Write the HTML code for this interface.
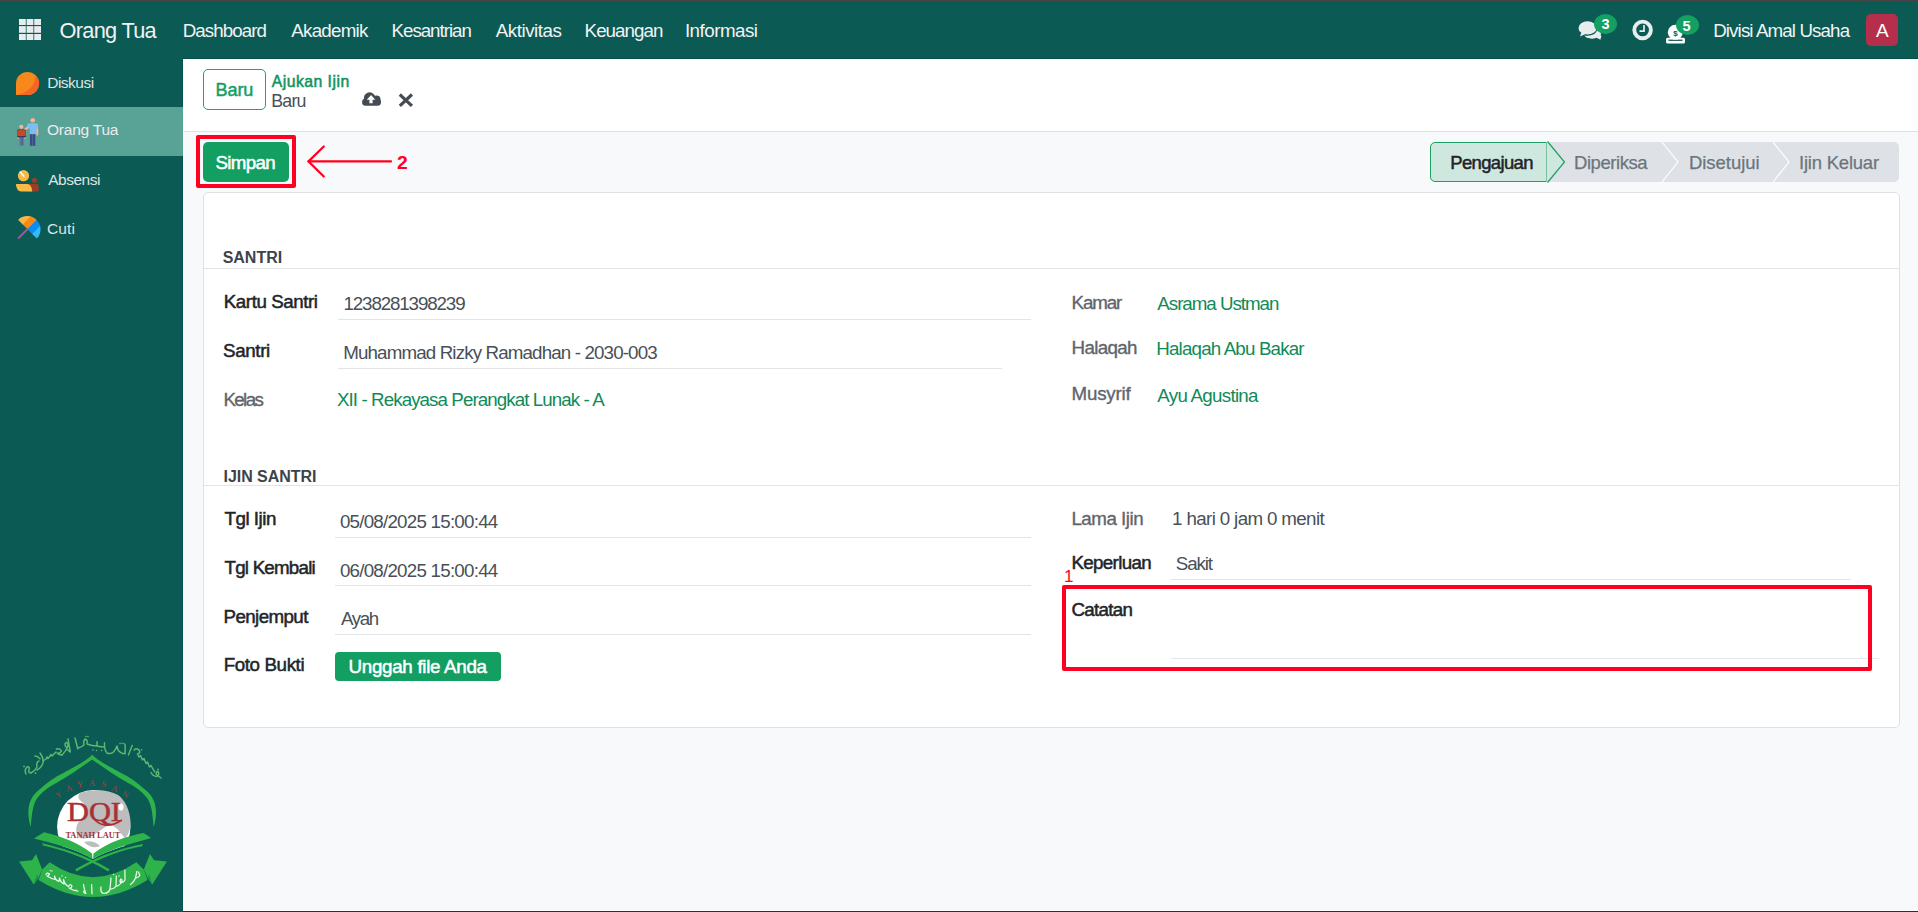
<!DOCTYPE html>
<html><head><meta charset="utf-8"><style>
html,body{margin:0;padding:0;}
body{width:1918px;height:912px;overflow:hidden;position:relative;background:#f8f9fa;font-family:"Liberation Sans",sans-serif;}
.a{position:absolute;}
.t{position:absolute;white-space:pre;line-height:1;font-family:"Liberation Sans",sans-serif;}
svg{position:absolute;left:0;top:0;overflow:visible;}
</style></head><body>
<div class="a" style="left:0;top:0;width:1918px;height:1px;background:#4a4344"></div>
<div class="a" style="left:0;top:1px;width:1918px;height:57px;background:#0c5a54"></div>
<div class="a" style="left:182px;top:58px;width:1736px;height:1px;background:#03504a"></div>
<div class="a" style="left:0;top:58px;width:182px;height:853px;background:#0c5a54"></div>
<div class="a" style="left:182px;top:59px;width:1px;height:852px;background:#02514b"></div>
<div class="a" style="left:0;top:107px;width:183px;height:49px;background:#58a296"></div>
<div class="a" style="left:183px;top:59px;width:1px;height:852px;background:#ffffff"></div>
<div class="a" style="left:183px;top:910px;width:1735px;height:1px;background:#ffffff"></div>
<div class="a" style="left:0;top:911px;width:183px;height:1px;background:#483f40"></div>
<div class="a" style="left:183px;top:911px;width:1735px;height:1px;background:#2e2e2e"></div>
<div class="a" style="left:184px;top:59px;width:1734px;height:72px;background:#ffffff"></div>
<div class="a" style="left:184px;top:131px;width:1734px;height:1px;background:#dfe2e5"></div>
<!-- Baru button -->
<div class="a" style="left:203px;top:69px;width:61px;height:39px;border:1px solid #1fa46a;border-radius:5px;background:#fff"></div>
<!-- red box simpan -->
<div class="a" style="left:196px;top:135px;width:92px;height:45px;border:4px solid #ff0022;border-radius:2px"></div>
<div class="a" style="left:203px;top:142px;width:86px;height:40px;background:#129f61;border-radius:5px"></div>
<!-- status bar -->
<div class="a" style="left:1540px;top:142px;width:359px;height:40px;background:#dee2e6;border-radius:0 5px 5px 0"></div>
<div class="a" style="left:1430px;top:142px;width:115px;height:38px;background:#cfe8df;border:1px solid #1a9f63;border-right:1px solid #1a9f63;border-radius:5px 0 0 5px"></div>
<!-- sheet -->
<div class="a" style="left:203px;top:192px;width:1695px;height:534px;background:#fff;border:1px solid #dee2e6;border-radius:5px"></div>
<div class="a" style="left:204px;top:268px;width:1695px;height:1px;background:#e4e4e4"></div>
<div class="a" style="left:204px;top:485px;width:1695px;height:1px;background:#e4e4e4"></div>
<!-- underlines -->
<div class="a" style="left:338px;top:319px;width:693px;height:1px;background:#e1e5e9"></div>
<div class="a" style="left:338px;top:368px;width:664px;height:1px;background:#e1e5e9"></div>
<div class="a" style="left:335px;top:537px;width:696px;height:1px;background:#e1e5e9"></div>
<div class="a" style="left:335px;top:585px;width:696px;height:1px;background:#e1e5e9"></div>
<div class="a" style="left:335px;top:634px;width:696px;height:1px;background:#e1e5e9"></div>
<div class="a" style="left:1171px;top:579px;width:680px;height:1px;background:#e1e5e9"></div>
<div class="a" style="left:1171px;top:658px;width:708px;height:1px;background:#e6e9ec"></div>
<!-- unggah -->
<div class="a" style="left:335px;top:652px;width:166px;height:29px;background:#129f61;border-radius:4px"></div>
<!-- red box catatan -->
<div class="a" style="left:1062px;top:585px;width:802px;height:78px;border:4px solid #ff0022;border-radius:2px"></div>
<!-- avatar -->
<div class="a" style="left:1866px;top:14px;width:32px;height:32px;background:#b52f4c;border-radius:5px"></div>

<svg width="1918" height="912" viewBox="0 0 1918 912">
<!-- grid icon -->
<g fill="#e9ecef">
<rect x="19" y="19" width="6.8" height="6"/><rect x="26.6" y="19" width="6.8" height="6"/><rect x="34.2" y="19" width="6.8" height="6"/>
<rect x="19" y="26.1" width="6.8" height="6.7"/><rect x="26.6" y="26.1" width="6.8" height="6.7"/><rect x="34.2" y="26.1" width="6.8" height="6.7"/>
<rect x="19" y="34" width="6.8" height="6"/><rect x="26.6" y="34" width="6.8" height="6"/><rect x="34.2" y="34" width="6.8" height="6"/>
</g>
<!-- arrow annotation -->
<g stroke="#ff0022" stroke-width="2.2" fill="none" stroke-linecap="round" stroke-linejoin="round">
<path d="M323.8,146.5 L308.5,161.4 L323.8,176.5"/>
<path d="M308.5,161.4 H391"/>
</g>
<!-- status arrow -->
<path d="M1546.5,142 L1564.5,162 L1546.5,182 Z" fill="#cfe8df"/>
<path d="M1547.5,141.5 L1564.5,162 L1547.5,182.5" fill="none" stroke="#1a9f63" stroke-width="1.2"/>
<path d="M1662,142 L1678,162 L1662,182" fill="none" stroke="#ffffff" stroke-width="1.2"/>
<path d="M1773,142 L1789,162 L1773,182" fill="none" stroke="#ffffff" stroke-width="1.2"/>
</svg>

<svg width="1918" height="912" viewBox="0 0 1918 912">
<!-- chat icon -->
<g fill="#e9ecef">
<path d="M1592,32.5 C1596,33 1600.5,34.5 1601.5,36 C1601,37.5 1600.5,39 1600.5,39.8 L1596.5,37.8 C1594,38.6 1590,38.8 1587.5,37.8 C1585,37 1584.5,36 1586,35 Z"/>
</g>
<ellipse cx="1592.5" cy="33.8" rx="8.6" ry="4.6" fill="#e9ecef"/>
<path d="M1578.5,28 A9,6.7 0 1 1 1584,34.2" fill="#0c5a54" stroke="#0c5a54" stroke-width="2"/>
<g fill="#e9ecef">
<ellipse cx="1587.5" cy="27.9" rx="9" ry="6.6"/>
<path d="M1581.5,32 L1580,36.6 L1585.5,34 Z"/>
</g>
<!-- clock -->
<circle cx="1642.6" cy="29.9" r="8.3" fill="none" stroke="#e9ecef" stroke-width="3.9"/>
<path d="M1644,25 V31.2 H1639.5" fill="none" stroke="#e9ecef" stroke-width="1.7"/>
<!-- money -->
<g>
<rect x="1666" y="37.8" width="19" height="5.7" rx="1.5" fill="#ffffff"/>
<rect x="1668.5" y="39.6" width="14" height="1.3" fill="#0c5a54"/>
<circle cx="1675.3" cy="32.2" r="7.5" fill="#ffffff"/>
<text x="1675.6" y="35.5" font-family="Liberation Sans" font-size="8" font-weight="700" fill="#0c5a54" text-anchor="middle">$</text>
</g>
<!-- cloud upload -->
<g fill="#454b52">
<circle cx="369.6" cy="98" r="5.7"/>
<circle cx="376.5" cy="99.5" r="4"/>
<rect x="362.1" y="98.5" width="18.9" height="7.3" rx="3.6"/>
</g>
<path d="M371.1,95 L375.3,99.7 H372.6 V103.3 H369.4 V99.7 H366.8 Z" fill="#ffffff"/>
<!-- close x -->
<path d="M401,95.6 L410.8,104.8 M410.8,95.6 L401,104.8" stroke="#454b52" stroke-width="3.2" stroke-linecap="square"/>
<!-- sidebar: diskusi -->
<path d="M16,95 V83.5 A11.5,11.5 0 1 1 27.5,95 Z" fill="#f7891a"/>
<path d="M35.2,74.9 C36,84 30,92 17,95 H27.5 A11.5,11.5 0 0 0 35.2,74.9 Z" fill="#f56428"/>
<!-- sidebar: orang tua -->
<g>
<circle cx="32.7" cy="120.2" r="2.3" fill="#f8b29a"/>
<path d="M27,125.5 Q27,123.3 29.5,123.3 H35.8 Q38.1,123.3 38.1,125.5 V128.5 H36.3 V134.2 H29.8 V128.5 H27 Z" fill="#7dbdf5"/>
<rect x="36.3" y="128.3" width="1.9" height="7.3" rx="0.9" fill="#f8b29a"/>
<path d="M27.5,126.5 L28.8,128.2 L24.5,131.2 L23.4,129.6 Z" fill="#f8b29a"/>
<rect x="29.9" y="134.2" width="2.6" height="11.6" fill="#3f4a8a"/>
<rect x="32.7" y="134.2" width="2.6" height="11.6" fill="#3f4a8a"/>
<circle cx="21.3" cy="126.8" r="2.1" fill="#f8b29a"/>
<rect x="17.3" y="129.4" width="8.5" height="8" rx="1.2" fill="#1f2d6b"/>
<rect x="17.1" y="130" width="8.7" height="6.2" rx="1.5" fill="#c44a2c"/>
<rect x="17.5" y="137.5" width="1.2" height="1.2" fill="#f8b29a"/>
<rect x="24.4" y="137.5" width="1.2" height="1.2" fill="#f8b29a"/>
<rect x="19.5" y="137.6" width="1.9" height="8" fill="#6272a6"/>
<rect x="21.5" y="137.6" width="1.8" height="8" fill="#4d5a96"/>
</g>
<!-- sidebar: absensi -->
<circle cx="23.5" cy="175.7" r="5.6" fill="#fbb945"/>
<path d="M20.3,172.1 L23.9,176.2" stroke="#ffffff" stroke-width="1.5" stroke-linecap="round"/>
<circle cx="34.5" cy="180.3" r="2.6" fill="#983f25"/>
<path d="M27.8,184.1 H36.6 A2.2,2.2 0 0 1 38.8,186.3 V189.4 A2.2,2.2 0 0 1 36.6,191.6 H27.8 Z" fill="#983f25"/>
<path d="M16,184.1 H27.5 C30.5,184.1 32,188 32.2,191.6 H21 C18,191.6 16,188 16,184.1 Z" fill="#fbb945"/>
<!-- sidebar: cuti umbrella -->
<defs><clipPath id="umb"><path d="M17.99,219.8 A13.3,13.3 0 0 1 36.8,238.6 Z"/></clipPath></defs>
<g clip-path="url(#umb)"><g transform="rotate(45 27.4 229.2)">
<rect x="14" y="210" width="7.2" height="20" fill="#fbb545"/>
<rect x="20.7" y="210" width="7.2" height="20" fill="#f78a15"/>
<rect x="27.4" y="210" width="7.2" height="20" fill="#0d8bf2"/>
<rect x="34.1" y="210" width="6.8" height="20" fill="#2fbdf8"/>
</g></g>
<path d="M27.4,229.2 L18.6,238" stroke="#a0559a" stroke-width="2" stroke-linecap="round"/>
</svg>

<!-- badges -->
<div class="a" style="left:1594px;top:14px;width:23px;height:20px;background:#13a062;border-radius:50%"></div>
<div class="a" style="left:1676px;top:15px;width:23px;height:20px;background:#13a062;border-radius:50%"></div>

<svg width="1918" height="912" viewBox="0 0 1918 912">
<!-- arabic arc text (approximation) -->
<g fill="none" stroke="#5fb870" stroke-width="1.45" stroke-linecap="round" stroke-linejoin="round">
<path d="M26,774 Q24,770 27,767 Q30,766 29,770 Q28,773 31,773 Q35,771 37,767 Q36,762 39,761"/>
<path d="M40,753 Q44,758 43,763 Q41,768 37,770"/>
<path d="M35,756 Q37.5,756 40,758.7"/>
<path d="M43,761 L46,759 L47,757 L48,758.5 L50,756 L51,754.5 L52,756 L56,752"/>
<path d="M56.4,749 Q60,748 61.5,751 Q60,754 57,753 Q59,755 62,755"/>
<path d="M62,755 Q66,751 67.5,747 Q69,743 66,742.5 Q64,744 66,747 Q68,751 70.3,752 L68,739"/>
<path d="M75,738 L77.8,748.8"/>
<path d="M78,748 Q82,747 84,745 Q83,741 85,739 Q88,740 87,744 Q92,746 97,746 L97,741.7 M97,746 Q101,747 104.5,747 L104.5,742.8"/>
<path d="M104.5,747 Q105,751 107,753 Q111,754.5 113.5,752 Q116,749 117,746 L118,750 Q121,753.8 125.1,753.8 L125.1,744.4"/>
<path d="M132.2,745.5 L128.4,754.9"/>
<path d="M134.2,750 Q136,747.5 139,750 Q141,753 137.5,754 L139,757 L140.5,755.5 L142.5,760 L144,758.5 L146,763.5 L147.5,762 L149.5,767 L151,765.5 L154.7,771.9"/>
<path d="M151,772.5 Q153,776.5 157,776.5 Q160,774.5 158,771.5 Q155.5,771.5 156.5,774.5 L161,778"/>
</g>
<g fill="#5fb870">
<circle cx="24" cy="766.4" r="0.9"/><circle cx="35.5" cy="773.2" r="0.9"/><circle cx="86" cy="736.5" r="0.8"/><circle cx="88" cy="736.5" r="0.8"/>
<circle cx="93" cy="750" r="0.8"/><circle cx="96.5" cy="750.5" r="0.8"/><circle cx="101.5" cy="750.5" r="0.8"/>
<circle cx="120" cy="743.6" r="0.8"/><circle cx="122" cy="743.2" r="0.8"/><circle cx="124" cy="743.6" r="0.8"/><circle cx="138.5" cy="749.8" r="0.8"/><circle cx="141.5" cy="749.8" r="0.8"/><circle cx="158" cy="769.5" r="0.9"/>
</g>
<!-- dome -->
<path d="M30.8,827.2 C26,812 28,798 39.5,789.5 C47,783 52,779.5 57.1,776.3 C70,769 84,763 92.2,754.8 C100.4,763 114.4,769 127.3,776.3 C132.4,779.5 137.4,783 144.9,789.5 C156.4,798 158.4,812 153.6,827.2 C152.4,812 151.4,802 144.9,795.6 C141.4,791 135.4,787 127.3,782.5 C112.4,774 98.4,764 92.2,759.5 C86,764 72,774 57.1,782.5 C49,787 43,791 39.5,795.6 C33,802 32,812 30.8,827.2 Z" fill="#2db34a"/>
<!-- globe -->
<defs><clipPath id="gclip"><path d="M30,770 H160 V837.9 C130,844 109,849 93,859 C76,849 55,844 33.9,838.5 Z"/></clipPath></defs>
<g clip-path="url(#gclip)">
<circle cx="93.8" cy="826.8" r="36.7" fill="#ffffff"/>
<g fill="#bdbdbd">
<path d="M80,793 C92,789 108,789 118,795 C125,800 130,810 130.5,822 C130.5,830 128,836 125,838 C121,834 118,828 113,826 C108,824 104,828 98,832 C92,836 86,840 80,838 C76,835 75,828 78,823 C82,818 88,816 88,810 C88,805 82,803 79,799 C78,797 78,795 80,793 Z"/>
<path d="M84,842 C90,840 96,842 100,846 C96,848 90,848 84,842 Z"/>
</g>
<g fill="#ffffff">
<ellipse cx="121" cy="807" rx="2.5" ry="3.5"/>
</g>
</g>
<!-- YAYASAN -->
<g fill="#b03a3a" font-family="Liberation Serif" font-size="8.5" text-anchor="middle">
<text x="60" y="797" transform="rotate(-30 60 797)">Y</text>
<text x="70" y="791" transform="rotate(-20 70 791)">A</text>
<text x="80.5" y="787" transform="rotate(-10 80.5 787)">Y</text>
<text x="92" y="785.5">A</text>
<text x="103.5" y="787" transform="rotate(10 103.5 787)">S</text>
<text x="114" y="791" transform="rotate(20 114 791)">A</text>
<text x="124" y="797" transform="rotate(30 124 797)">N</text>
</g>
<!-- DQI -->
<text x="67" y="821" font-family="Liberation Serif" font-size="26.5" fill="#a83236" stroke="#a83236" stroke-width="0.5" textLength="54" lengthAdjust="spacingAndGlyphs">DQI</text>
<path d="M94,819 C100,826 110,828 122,820" stroke="#a83236" stroke-width="1.6" fill="none"/>
<text x="65.4" y="837.8" font-family="Liberation Serif" font-size="8" font-weight="700" fill="#a83236" textLength="55" lengthAdjust="spacingAndGlyphs">TANAH LAUT</text>
<!-- book -->
<g fill="#2db34a">
<path d="M33.9,838.5 L44,832.2 C60,836 78,842 92,853.5 L92.5,859 C76,849 55,844 33.9,838.5 Z"/>
<path d="M151.2,837.9 L143.6,832.9 C127,836 108,842 93.5,853.5 L93,859 C109,849 130,844 151.2,837.9 Z"/>
<path d="M42.1,843.3 L43,845.6 C62,850 82,856 108.3,871.5 L109.5,869.2 C83,854 62,848 42.1,843.3 Z"/>
<path d="M143,844 L142.2,846.3 C123,850 103,856 76.5,871.5 L75.2,869.2 C102,854 123,848 143,844 Z"/>
</g>
<!-- ribbon -->
<path d="M49.7,862.3 Q93,892 136.3,862.3 L143.8,869.4 L147.5,880 Q93,914 38.5,880 L42.2,869.4 Z" fill="#2db34a"/>
<path d="M36,854 L42.2,869.4 L38.5,877.7 L33.7,884.5 L19.1,861.4 L32,860.3 Z" fill="#2db34a"/>
<path d="M150,854 L143.8,869.4 L147.5,877.7 L152.3,884.5 L166.9,861.4 L154,860.3 Z" fill="#2db34a"/>
<path d="M38.5,877.7 L33.7,884.5 L37,874 Z M147.5,877.7 L152.3,884.5 L149,874 Z" fill="#17994a"/>
<!-- ribbon arabic text approx -->
<g fill="none" stroke="#eef7ef" stroke-width="1.25" stroke-linecap="round" stroke-linejoin="round">
<path d="M46,874.5 Q47,872 49.5,874 Q48,876 47,876 Q52,879 55,879.5 L54.5,876 Q56,881 59,881.5 L59.5,878 Q61,883 64,884 L63.5,879.5 Q65,885 68.5,886.5 Q70,883 72,886 Q71,889 69,888 Q74,891 78,891"/>
<path d="M83.5,884.5 Q84,889 85.9,893.5 Q83,893 84,891"/>
<path d="M91.6,884.7 L92,893.8"/>
<path d="M101,887 Q100,893 104,893.5 Q109,893 110,889 L111,878 M111,889 Q114,889 116,886 L116.3,876 M116.5,886 Q119,886 121,883 Q123,880 121,879 Q119,881 121,883 Q124,882 125,880 L124.9,870"/>
<path d="M130.5,884.5 Q134,882 135.5,878 L136.9,871.5 M136,878 Q139,877 139.8,875.5 L138.5,872"/>
</g>
<g fill="#eef7ef"><circle cx="50.3" cy="870.6" r="0.7"/><circle cx="52" cy="871" r="0.7"/><circle cx="62" cy="876" r="0.7"/><circle cx="65.5" cy="877.5" r="0.7"/><circle cx="76" cy="890" r="0.7"/><circle cx="113.5" cy="874.5" r="0.7"/><circle cx="119" cy="876" r="0.7"/></g>
</svg>

<span class="t" style="left:59.6px;top:20.0px;font-size:21.75px;font-weight:400;letter-spacing:-0.712px;color:#f1f3f5;">Orang Tua</span><span class="t" style="left:182.75px;top:22.0px;font-size:18.75px;font-weight:400;letter-spacing:-0.938px;color:#f1f3f5;">Dashboard</span><span class="t" style="left:291.25px;top:22.0px;font-size:18.75px;font-weight:400;letter-spacing:-0.736px;color:#f1f3f5;">Akademik</span><span class="t" style="left:391.5px;top:22.0px;font-size:18.75px;font-weight:400;letter-spacing:-1.028px;color:#f1f3f5;">Kesantrian</span><span class="t" style="left:495.8px;top:22.0px;font-size:18.75px;font-weight:400;letter-spacing:-0.475px;color:#f1f3f5;">Aktivitas</span><span class="t" style="left:584.6px;top:22.0px;font-size:18.75px;font-weight:400;letter-spacing:-0.957px;color:#f1f3f5;">Keuangan</span><span class="t" style="left:684.9px;top:22.0px;font-size:18.75px;font-weight:400;letter-spacing:-0.5px;color:#f1f3f5;">Informasi</span><span class="t" style="left:1713.2px;top:22.0px;font-size:18.75px;font-weight:400;letter-spacing:-0.888px;color:#f1f3f5;">Divisi Amal Usaha</span><span class="t" style="left:47.2px;top:75.0px;font-size:15.5px;font-weight:400;letter-spacing:-0.5px;color:#dee2e6;">Diskusi</span><span class="t" style="left:47.0px;top:121.7px;font-size:15.5px;font-weight:400;letter-spacing:-0.225px;color:#e9ecef;">Orang Tua</span><span class="t" style="left:48.2px;top:171.9px;font-size:15.5px;font-weight:400;letter-spacing:-0.5px;color:#dee2e6;">Absensi</span><span class="t" style="left:47.0px;top:221.2px;font-size:15.5px;font-weight:400;letter-spacing:0.1px;color:#dee2e6;">Cuti</span><span class="t" style="left:215.6px;top:81.3px;font-size:18.0px;font-weight:400;letter-spacing:-0.1px;color:#14a065;-webkit-text-stroke:0.5px #14a065;">Baru</span><span class="t" style="left:271.7px;top:74.2px;font-size:15.75px;font-weight:400;letter-spacing:0.48px;color:#10935d;-webkit-text-stroke:0.5px #10935d;">Ajukan Ijin</span><span class="t" style="left:271.3px;top:93.4px;font-size:17.75px;font-weight:400;letter-spacing:-0.767px;color:#495057;">Baru</span><span class="t" style="left:215.5px;top:154.1px;font-size:18.75px;font-weight:400;letter-spacing:-0.68px;color:#ffffff;-webkit-text-stroke:0.5px #ffffff;">Simpan</span><span class="t" style="left:397.0px;top:152.7px;font-size:19.25px;font-weight:700;letter-spacing:0.0px;color:#ff0022;">2</span><span class="t" style="left:1450.25px;top:154.25px;font-size:18.5px;font-weight:400;letter-spacing:-0.656px;color:#1f2328;-webkit-text-stroke:0.5px #1f2328;">Pengajuan</span><span class="t" style="left:1574.0px;top:154.25px;font-size:18.5px;font-weight:400;letter-spacing:-0.438px;color:#6c757d;-webkit-text-stroke:0.25px #6c757d;">Diperiksa</span><span class="t" style="left:1689.0px;top:154.25px;font-size:18.5px;font-weight:400;letter-spacing:-0.05px;color:#6c757d;-webkit-text-stroke:0.25px #6c757d;">Disetujui</span><span class="t" style="left:1799.0px;top:154.25px;font-size:18.5px;font-weight:400;letter-spacing:-0.22px;color:#6c757d;-webkit-text-stroke:0.25px #6c757d;">Ijin Keluar</span><span class="t" style="left:222.7px;top:250.0px;font-size:16px;font-weight:700;letter-spacing:-0.02px;color:#3d4349;">SANTRI</span><span class="t" style="left:223.8px;top:293.0px;font-size:18.75px;font-weight:400;letter-spacing:-0.436px;color:#212529;-webkit-text-stroke:0.5px #212529;">Kartu Santri</span><span class="t" style="left:343.5px;top:295.0px;font-size:18.75px;font-weight:400;letter-spacing:-1.125px;color:#495057;">1238281398239</span><span class="t" style="left:223.0px;top:341.7px;font-size:18.75px;font-weight:400;letter-spacing:-0.34px;color:#212529;-webkit-text-stroke:0.5px #212529;">Santri</span><span class="t" style="left:343.2px;top:344.0px;font-size:18.75px;font-weight:400;letter-spacing:-0.861px;color:#495057;">Muhammad Rizky Ramadhan - 2030-003</span><span class="t" style="left:223.4px;top:390.5px;font-size:18.75px;font-weight:400;letter-spacing:-1.6px;color:#5f656b;-webkit-text-stroke:0.35px #5f656b;">Kelas</span><span class="t" style="left:337.0px;top:391.0px;font-size:18.75px;font-weight:400;letter-spacing:-0.921px;color:#0f8b57;">XII - Rekayasa Perangkat Lunak - A</span><span class="t" style="left:1071.5px;top:293.7px;font-size:18.75px;font-weight:400;letter-spacing:-1.125px;color:#5f656b;-webkit-text-stroke:0.35px #5f656b;">Kamar</span><span class="t" style="left:1157.3px;top:294.8px;font-size:18.75px;font-weight:400;letter-spacing:-1.025px;color:#0f8b57;">Asrama Ustman</span><span class="t" style="left:1071.5px;top:339.3px;font-size:18.75px;font-weight:400;letter-spacing:-0.633px;color:#5f656b;-webkit-text-stroke:0.35px #5f656b;">Halaqah</span><span class="t" style="left:1156.3px;top:340.0px;font-size:18.75px;font-weight:400;letter-spacing:-0.831px;color:#0f8b57;">Halaqah Abu Bakar</span><span class="t" style="left:1071.5px;top:385.3px;font-size:18.75px;font-weight:400;letter-spacing:-0.2px;color:#5f656b;-webkit-text-stroke:0.35px #5f656b;">Musyrif</span><span class="t" style="left:1157.3px;top:387.0px;font-size:18.75px;font-weight:400;letter-spacing:-0.718px;color:#0f8b57;">Ayu Agustina</span><span class="t" style="left:223.5px;top:468.5px;font-size:16px;font-weight:700;letter-spacing:-0.05px;color:#3d4349;">IJIN SANTRI</span><span class="t" style="left:224.5px;top:510.3px;font-size:18.75px;font-weight:400;letter-spacing:-0.471px;color:#212529;-webkit-text-stroke:0.5px #212529;">Tgl Ijin</span><span class="t" style="left:339.9px;top:513.3px;font-size:18.75px;font-weight:400;letter-spacing:-0.761px;color:#495057;">05/08/2025 15:00:44</span><span class="t" style="left:224.5px;top:559.0px;font-size:18.75px;font-weight:400;letter-spacing:-0.78px;color:#212529;-webkit-text-stroke:0.5px #212529;">Tgl Kembali</span><span class="t" style="left:339.9px;top:561.6px;font-size:18.75px;font-weight:400;letter-spacing:-0.761px;color:#495057;">06/08/2025 15:00:44</span><span class="t" style="left:223.5px;top:608.0px;font-size:18.75px;font-weight:400;letter-spacing:-0.6px;color:#212529;-webkit-text-stroke:0.5px #212529;">Penjemput</span><span class="t" style="left:340.9px;top:610.0px;font-size:18.75px;font-weight:400;letter-spacing:-1.367px;color:#495057;">Ayah</span><span class="t" style="left:223.7px;top:656.0px;font-size:18.75px;font-weight:400;letter-spacing:-0.389px;color:#212529;-webkit-text-stroke:0.5px #212529;">Foto Bukti</span><span class="t" style="left:348.5px;top:657.5px;font-size:18.75px;font-weight:400;letter-spacing:-0.287px;color:#ffffff;-webkit-text-stroke:0.5px #ffffff;">Unggah file Anda</span><span class="t" style="left:1071.4px;top:510.4px;font-size:18.75px;font-weight:400;letter-spacing:-0.488px;color:#5f656b;-webkit-text-stroke:0.35px #5f656b;">Lama Ijin</span><span class="t" style="left:1172.1px;top:510.4px;font-size:18.75px;font-weight:400;letter-spacing:-0.637px;color:#495057;">1 hari 0 jam 0 menit</span><span class="t" style="left:1071.4px;top:553.5px;font-size:18.75px;font-weight:400;letter-spacing:-0.65px;color:#212529;-webkit-text-stroke:0.5px #212529;">Keperluan</span><span class="t" style="left:1175.8px;top:555.4px;font-size:18.75px;font-weight:400;letter-spacing:-1.125px;color:#495057;">Sakit</span><span class="t" style="left:1064.1px;top:568.0px;font-size:17.0px;font-weight:400;letter-spacing:0.0px;color:#ff0022;">1</span><span class="t" style="left:1071.4px;top:601.4px;font-size:18.75px;font-weight:400;letter-spacing:-0.683px;color:#212529;-webkit-text-stroke:0.5px #212529;">Catatan</span><span class="t" style="left:1876.0px;top:20.9px;font-size:19.0px;font-weight:400;letter-spacing:0.0px;color:#ffffff;">A</span><span class="t" style="left:1601.6px;top:17.0px;font-size:14.5px;font-weight:700;letter-spacing:0.0px;color:#ffffff;">3</span><span class="t" style="left:1682.5px;top:19.0px;font-size:14.5px;font-weight:700;letter-spacing:0.0px;color:#ffffff;">5</span>
</body></html>
